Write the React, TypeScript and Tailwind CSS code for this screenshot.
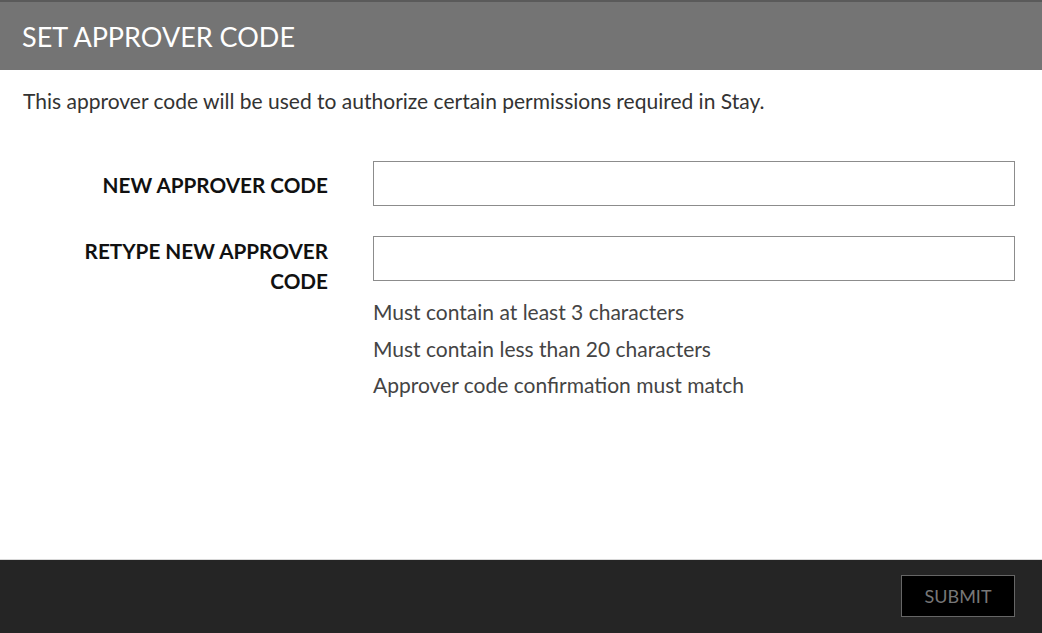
import React from "react";

export default function App() {
  const font = { fontFamily: "Lato, 'Open Sans', sans-serif" };
  return (
    <div className="w-[1042px] h-[633px] flex flex-col bg-white overflow-hidden" style={font}>
      <div className="h-[70px] shrink-0 bg-[#747474] border-t-2 border-[#5a5a5a] flex items-center px-[22px]">
        <h1 className="text-[27px] text-white leading-none pt-[1px]">SET APPROVER CODE</h1>
      </div>
      <div className="flex-1 flex flex-col">
        <p className="text-[21px] text-[#333] leading-[24px] pl-[23px] pt-[19px]">
          This approver code will be used to authorize certain permissions required in Stay.
        </p>
        <div className="flex mt-[48px]">
          <div className="w-[328px] shrink-0 pt-[9px] text-right">
            <label className="block text-[20.7px] font-bold text-[#111] leading-[30px]">NEW APPROVER CODE</label>
          </div>
          <div className="ml-[45px] w-[642px]">
            <input className="w-full h-[45px] border border-[#8c8c8c] outline-none" />
          </div>
        </div>
        <div className="flex mt-[30px]">
          <div className="w-[328px] shrink-0 text-right">
            <label className="block text-[20.7px] font-bold text-[#111] leading-[30px] pl-[75px]">
              RETYPE NEW APPROVER CODE
            </label>
          </div>
          <div className="ml-[45px] w-[642px]">
            <input className="w-full h-[45px] border border-[#8c8c8c] outline-none" />
            <ul className="mt-[15px] text-[21px] text-[#444]">
              <li className="leading-[31px]">Must contain at least 3 characters</li>
              <li className="leading-[43px]">Must contain less than 20 characters</li>
              <li className="leading-[30px]">Approver code confirmation must match</li>
            </ul>
          </div>
        </div>
      </div>
      <div className="h-[74px] shrink-0 bg-[#252525] border-t border-[#d8d8d8] flex items-center justify-end pr-[27px]">
        <button className="w-[114px] h-[42px] -mt-[2px] bg-black border border-[#666] text-[#777] text-[18px] leading-none">
          SUBMIT
        </button>
      </div>
    </div>
  );
}
